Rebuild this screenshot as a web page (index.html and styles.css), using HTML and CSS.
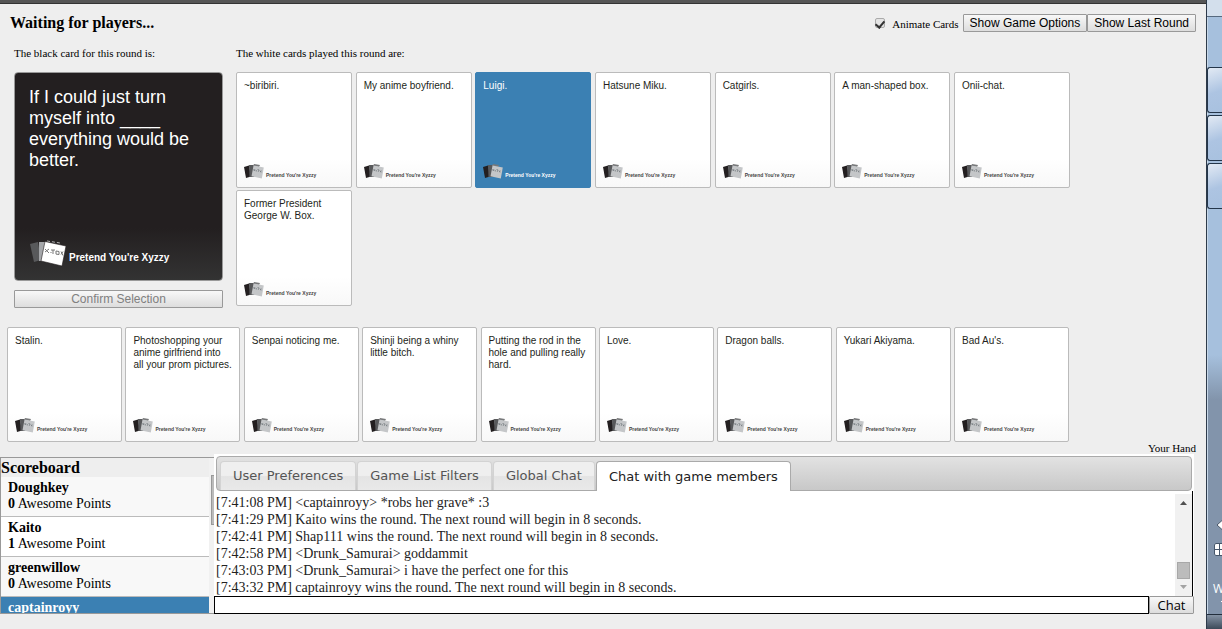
FILE: index.html
```html
<!DOCTYPE html>
<html lang="en">
<head>
<meta charset="utf-8">
<title>Pretend You're Xyzzy</title>
<link rel="stylesheet" href="styles.css">
</head>
<body>
<svg class="defs" aria-hidden="true">
  <symbol id="logo" viewBox="0 0 20 15">
    <path fill="#231f20" d="M0 3 5 1.500 7 12.500 2 14z"/>
    <path fill="#58595b" d="M5 1 11 1 10.500 13 5.500 13z"/>
    <path fill="#77787a" d="M10 0 16 1 15 3 9 2z"/>
    <path fill="#c4c6c8" d="M9.500 1.500 19.800 3.500 17.800 14.500 7.500 12.300z"/>
    <path fill="none" stroke="#777d82" stroke-width=".8" d="m9.500 5 1.500 2m0-1.800L9.800 7m2.500-1v1.500m1.200-2 1.500.4-.8 2m1.800-1.400 1.200 1.800m.3-1.500-1.500 1.300"/>
  </symbol>
  <symbol id="logo-dark" viewBox="0 0 37 27">
    <path fill="#58595b" d="M1 4 9 2 12 20 5 22z"/>
    <path fill="#a5a7aa" d="M10 2H18L16 21H10z"/>
    <path fill="none" stroke="#bbb" stroke-dasharray="3 2" d="M18 1 31 3"/>
    <path fill="#fff" stroke="#231f20" stroke-width=".6" d="M16 1.500 37 6 33 26 12 21z"/>
    <path fill="none" stroke="#777" stroke-width="1" d="m16 9 4 4m0-4-4 3m6 0v1m2-3v4m-2-4h4m1 1 3 .5v3l-3-.4zm5 .5 2 4m0-4-2 3"/>
  </symbol>
</svg>
<main class="page">
  <header class="info-bar">
    <h1 class="status">Waiting for players...</h1>
    <input class="check" type="checkbox" id="animate" checked>
    <label class="check-label" for="animate">Animate Cards</label>
    <button class="btn">Show Game Options</button>
    <button class="btn">Show Last Round</button>
  </header>

  <section class="round">
    <div class="black-column">
      <p class="caption">The black card for this round is:</p>
      <article class="black-card">
        <span>If I could just turn myself into ____ everything would be better.</span>
        <footer class="brand-dark"><svg class="logo-dark"><use href="#logo-dark"/></svg>Pretend You're Xyzzy</footer>
      </article>
      <button class="btn confirm" disabled>Confirm Selection</button>
    </div>
    <div class="white-column">
      <p class="caption">The white cards played this round are:</p>
      <div class="played">
        <article class="card"><span>~biribiri.</span><footer class="brand"><svg class="logo"><use href="#logo"/></svg>Pretend You're Xyzzy</footer></article>
        <article class="card"><span>My anime boyfriend.</span><footer class="brand"><svg class="logo"><use href="#logo"/></svg>Pretend You're Xyzzy</footer></article>
        <article class="card selected"><span>Luigi.</span><footer class="brand"><svg class="logo"><use href="#logo"/></svg>Pretend You're Xyzzy</footer></article>
        <article class="card"><span>Hatsune Miku.</span><footer class="brand"><svg class="logo"><use href="#logo"/></svg>Pretend You're Xyzzy</footer></article>
        <article class="card"><span>Catgirls.</span><footer class="brand"><svg class="logo"><use href="#logo"/></svg>Pretend You're Xyzzy</footer></article>
        <article class="card"><span>A man-shaped box.</span><footer class="brand"><svg class="logo"><use href="#logo"/></svg>Pretend You're Xyzzy</footer></article>
        <article class="card"><span>Onii-chat.</span><footer class="brand"><svg class="logo"><use href="#logo"/></svg>Pretend You're Xyzzy</footer></article>
        <article class="card"><span>Former President George W. Box.</span><footer class="brand"><svg class="logo"><use href="#logo"/></svg>Pretend You're Xyzzy</footer></article>
      </div>
    </div>
  </section>

  <section class="hand">
    <article class="card"><span>Stalin.</span><footer class="brand"><svg class="logo"><use href="#logo"/></svg>Pretend You're Xyzzy</footer></article>
    <article class="card"><span>Photoshopping your anime girlfriend into all your prom pictures.</span><footer class="brand"><svg class="logo"><use href="#logo"/></svg>Pretend You're Xyzzy</footer></article>
    <article class="card"><span>Senpai noticing me.</span><footer class="brand"><svg class="logo"><use href="#logo"/></svg>Pretend You're Xyzzy</footer></article>
    <article class="card"><span>Shinji being a whiny little bitch.</span><footer class="brand"><svg class="logo"><use href="#logo"/></svg>Pretend You're Xyzzy</footer></article>
    <article class="card"><span>Putting the rod in the hole and pulling really hard.</span><footer class="brand"><svg class="logo"><use href="#logo"/></svg>Pretend You're Xyzzy</footer></article>
    <article class="card"><span>Love.</span><footer class="brand"><svg class="logo"><use href="#logo"/></svg>Pretend You're Xyzzy</footer></article>
    <article class="card"><span>Dragon balls.</span><footer class="brand"><svg class="logo"><use href="#logo"/></svg>Pretend You're Xyzzy</footer></article>
    <article class="card"><span>Yukari Akiyama.</span><footer class="brand"><svg class="logo"><use href="#logo"/></svg>Pretend You're Xyzzy</footer></article>
    <article class="card"><span>Bad Au's.</span><footer class="brand"><svg class="logo"><use href="#logo"/></svg>Pretend You're Xyzzy</footer></article>
  </section>
  <p class="hand-label">Your Hand</p>

  <section class="bottom">
    <aside class="scoreboard">
      <div class="scores">
        <h2 class="score-title">Scoreboard</h2>
        <div class="player odd"><b>Doughkey</b><span><b>0</b> Awesome Points</span></div>
        <div class="player"><b>Kaito</b><span><b>1</b> Awesome Point</span></div>
        <div class="player odd"><b>greenwillow</b><span><b>0</b> Awesome Points</span></div>
        <div class="player active"><b>captainroyy</b></div>
      </div>
      <div class="score-track"><div class="score-thumb"></div></div>
    </aside>
    <div class="chat">
      <nav class="tabs">
        <button class="tab">User Preferences</button>
        <button class="tab">Game List Filters</button>
        <button class="tab">Global Chat</button>
        <button class="tab current">Chat with game members</button>
      </nav>
      <div class="log-row">
        <div class="log">
          <p>[7:41:08 PM] &lt;captainroyy&gt; *robs her grave* :3</p>
          <p>[7:41:29 PM] Kaito wins the round. The next round will begin in 8 seconds.</p>
          <p>[7:42:41 PM] Shap111 wins the round. The next round will begin in 8 seconds.</p>
          <p>[7:42:58 PM] &lt;Drunk_Samurai&gt; goddammit</p>
          <p>[7:43:03 PM] &lt;Drunk_Samurai&gt; i have the perfect one for this</p>
          <p>[7:43:32 PM] captainroyy wins the round. The next round will begin in 8 seconds.</p>
        </div>
        <div class="scrollbar">
          <svg class="arrow" viewBox="0 0 7 4"><path fill="#505050" d="M0 4 3.500 0 7 4z"/></svg>
          <div class="thumb"></div>
          <svg class="arrow" viewBox="0 0 7 4"><path fill="#a3a3a3" d="M0 0 3.500 4 7 0z"/></svg>
        </div>
      </div>
      <form class="send">
        <input class="message" type="text" aria-label="Chat message">
        <button class="btn chat-btn" type="button">Chat</button>
      </form>
    </div>
  </section>
</main>
<aside class="taskbar">
  <div class="start-item"></div>
  <div class="task"></div>
  <div class="task"></div>
  <div class="task"></div>
  <div class="tray">
    <svg class="tray-arrow" viewBox="0 0 6 10"><path fill="#fff" stroke="#4a5868" d="M6 .5 1 5 6 9.500"/></svg>
    <svg class="tray-win" viewBox="0 0 8 13"><path fill="#fff" stroke="#46566a" d="M8 .5H1.500L.5 2V11L1.500 12.500H8"/><path stroke="#46566a" d="M1 6.500H8M5.500 1V12"/></svg>
    <span>W</span>
    <i class="tray-mark"></i>
  </div>
  <div class="show-desktop"></div>
</aside>
</body>
</html>
```
FILE: styles.css
```css
* { box-sizing: border-box; }
body {
  margin: 0;
  display: flex;
  min-height: 100vh;
  background: #eee;
  color: #000;
  font-family: "Liberation Serif", serif;
  font-size: 11px;
}
h1, h2, p { margin: 0; }
button, input { margin: 0; }
.defs { position: absolute; width: 0; height: 0; }
.page { flex: 1; min-width: 0; border-top: 3px solid #555; box-shadow: inset 0 1px #333; }

.info-bar { display: flex; align-items: center; height: 38px; padding: 1px 10px 0; }
.status { flex: 1; font-size: 16px; }
.check {
  appearance: none;
  width: 10px;
  height: 10px;
  border: 1px solid #aaa;
  border-radius: 2px;
  background: #e4e4e4;
  display: grid;
  place-items: center;
}
.check:checked::before {
  content: "";
  width: 4px;
  height: 7px;
  border: solid #333;
  border-width: 0 2px 2px 0;
  transform: rotate(40deg);
}
.check-label { margin: 2px 4px 0 7px; }
.btn {
  height: 18px;
  padding: 0 6px;
  border: 1px solid #999;
  border-radius: 1px;
  background: linear-gradient(#f8f8f8, #ddd);
  color: #000;
  font: 12px/16px "Liberation Sans", sans-serif;
}

.round { display: flex; gap: 13px; padding: 5px 14px 0; }
.caption { height: 26px; line-height: 14px; }
.black-column { width: 209px; display: flex; flex-direction: column; }
.black-card {
  height: 209px;
  margin-bottom: 9px;
  padding: 14px 24px 13px 14px;
  display: flex;
  flex-direction: column;
  justify-content: space-between;
  border: 1px solid #999;
  border-radius: 4px;
  background: linear-gradient(#231f20 75%, #333);
  color: #fff;
  font: 18px/21px "Liberation Sans", sans-serif;
}
.brand-dark { display: flex; align-items: flex-end; gap: 3px; font-size: 10px; font-weight: bold; line-height: 18px; white-space: nowrap; }
.logo-dark { width: 37px; height: 27px; }
.confirm:disabled { color: #808080; }
.white-column { flex: 1; min-width: 0; }
.played {
  max-width: 834px;
  display: grid;
  grid-template-columns: repeat(auto-fill, 116px);
  grid-auto-rows: 116px;
  justify-content: space-between;
  gap: 2px;
}
.card {
  display: flex;
  flex-direction: column;
  justify-content: space-between;
  padding: 7px 7px 8px;
  border: 1px solid #bbb;
  border-radius: 2px;
  background: linear-gradient(#fff 75%, #f8f8f8);
  color: #231f20;
  font: 10px/12px "Liberation Sans", sans-serif;
}
.brand { display: flex; align-items: flex-end; gap: 2px; font-size: 5px; font-weight: bold; line-height: 8px; white-space: nowrap; color: #444; }
.logo { width: 20px; height: 15px; }
.selected { background: #3b80b3; border-color: #3b80b3; color: #fff; }
.selected .brand { color: #fff; }

.hand {
  max-width: 1069px;
  padding: 19px 0 0 7px;
  display: grid;
  grid-template-columns: repeat(auto-fill, 115px);
  grid-auto-rows: 115px;
  justify-content: space-between;
  gap: 2px;
}
.hand-label { height: 12px; padding-right: 10px; text-align: right; line-height: 12px; }

.bottom { display: flex; height: 160px; padding-right: 12px; }
.scoreboard {
  width: 214px;
  margin-top: 3px;
  display: flex;
  border: solid #999;
  border-width: 1px 0 1px 1px;
  overflow: hidden;
}
.scores { flex: 1; font-size: 14px; line-height: 16px; }
.score-title { height: 19px; font-size: 16px; line-height: 19px; }
.player { height: 40px; padding: 3px 7px; border-bottom: 1px solid #bbb; background: #fff; }
.player > b { display: block; }
.odd { background: #f8f8f8; }
.active { background: #3b80b3; color: #fff; }
.score-track { width: 5px; padding: 17px 0 0 2px; background: #f1f1f1; }
.score-thumb { height: 50px; background: #bbb; border: 1px solid #999; border-right: 0; }

.chat { flex: 1; min-width: 0; display: flex; flex-direction: column; background: #fff; }
.tabs {
  height: 35px;
  margin: 2px 2px 0;
  padding: 4px 3px 0;
  display: flex;
  align-items: flex-start;
  gap: 1px;
  border: 1px solid #aaa;
  border-radius: 4px;
  background: linear-gradient(#e2e2e2, #c8c8c8);
}
.tab {
  height: 29px;
  padding: 0 12px;
  border: 1px solid #d3d3d3;
  border-bottom: 0;
  border-radius: 4px 4px 0 0;
  background: linear-gradient(#efefef 48%, #e4e4e4 52%, #e9e9e9);
  color: #555;
  font: 13px/28px "DejaVu Sans", sans-serif;
  white-space: nowrap;
}
.current { height: 30px; background: #fff; border-color: #aaa; color: #212121; }
.log-row { flex: 1; min-height: 0; margin-right: 1px; display: flex; border-right: 1px solid #000; }
.log { flex: 1; min-width: 0; padding: 3px 2px 0; overflow: hidden; color: #222; font-size: 14px; line-height: 17px; }
.scrollbar {
  width: 17px;
  margin-top: 3px;
  padding: 7px 2px;
  display: flex;
  flex-direction: column;
  align-items: center;
  background: #f1f1f1;
}
.arrow { width: 7px; height: 4px; }
.thumb { width: 13px; height: 17px; margin: auto 0 6px; background: #bcbcbc; border: 1px solid #a8a8a8; }
.send { display: flex; height: 18px; }
.message { flex: 1; min-width: 0; height: 18px; border: 1px solid #000; background: #fff; padding: 0 4px; }
.chat-btn { width: 45px; padding: 0; font: 13px/16px "Open Sans", sans-serif; }

.taskbar {
  width: 16px;
  display: flex;
  flex-direction: column;
  gap: 2px;
  overflow: hidden;
  border-left: 1px solid #2d3a4a;
  box-shadow: inset 1px 0 #c8d8e8;
  background: linear-gradient(#a6c0dd 355px, #8294ab 400px, #8294ab);
}
.start-item { height: 17px; margin-bottom: 48px; border-bottom: 1px solid #56697e; background: #d3dfec; }
.task {
  height: 46px;
  border: solid #24364a;
  border-width: 1px 0 1px 1px;
  border-radius: 3px 0 0 3px;
  background: linear-gradient(160deg, #e2eaf4, #adc4e2 55%, #a8c1df);
}
.tray {
  margin-top: auto;
  display: flex;
  flex-direction: column;
  align-items: flex-end;
  color: #fff;
  font: 12px/14px "Open Sans", sans-serif;
}
.tray span { width: 9px; }
.tray-arrow { width: 6px; height: 10px; margin-bottom: 13px; }
.tray-win { width: 8px; height: 13px; margin-bottom: 26px; }
.tray-mark { width: 1px; height: 1px; margin: 5px 0 10px; background: #fff; }
.show-desktop { height: 15px; border-top: 1px solid #222e3c; background: linear-gradient(#8593a5, #3d4a59); }
```
